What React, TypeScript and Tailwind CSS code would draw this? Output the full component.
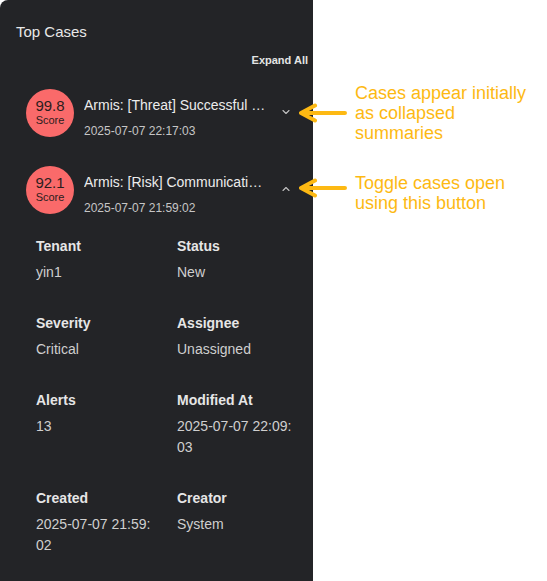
import { ChevronDown, ChevronUp } from 'lucide-react';

type Detail = { label: string; value: string };

const cases = [
  { id: 1, score: '99.8', title: 'Armis: [Threat] Successful Malicious Login Detected', time: '2025-07-07 22:17:03', open: false },
  { id: 2, score: '92.1', title: 'Armis: [Risk] Communication with Unsanctioned Service', time: '2025-07-07 21:59:02', open: true },
];

const details: Detail[] = [
  { label: 'Tenant', value: 'yin1' },
  { label: 'Status', value: 'New' },
  { label: 'Severity', value: 'Critical' },
  { label: 'Assignee', value: 'Unassigned' },
  { label: 'Alerts', value: '13' },
  { label: 'Modified At', value: '2025-07-07 22:09:03' },
  { label: 'Created', value: '2025-07-07 21:59:02' },
  { label: 'Creator', value: 'System' },
];

function Arrow({ className }: { className: string }) {
  return (
    <svg className={className} width="50" height="20" viewBox="0 0 50 20" fill="none">
      <path d="M3 10H47M17 2.5L3 10L17 17.5" stroke="#fdb913" strokeWidth="4" strokeLinecap="round" strokeLinejoin="round" />
    </svg>
  );
}

function CaseRow({ score, title, time, open }: { score: string; title: string; time: string; open: boolean }) {
  return (
    <div className="flex items-start py-[13px] pl-[10px] pr-4">
      <div className="flex h-12 w-12 shrink-0 flex-col items-center justify-center rounded-full bg-[#fa6a6a] pb-[3px] text-[#2b1d1d]">
        <span className="text-[15px] leading-[17px]">{score}</span>
        <span className="text-[11px] leading-[13px]">Score</span>
      </div>
      <div className="ml-[10px] min-w-0 flex-1 pt-[7px]">
        <div className="truncate text-[14px] leading-[18px] text-[#ececec]">{title}</div>
        <div className="mt-2 text-[12px] leading-[18px] text-[#c6c6c6]">{time}</div>
      </div>
      <div className="ml-3 mt-[17px] flex h-3 w-3 shrink-0 items-center justify-center text-[#c2c2c2]">
        {open ? <ChevronUp size={12} strokeWidth={2.2} /> : <ChevronDown size={12} strokeWidth={2.2} />}
      </div>
    </div>
  );
}

export default function App() {
  return (
    <div className="relative flex h-[581px] w-[547px] bg-white font-['Liberation_Sans',Arial,sans-serif]">
      <div className="w-[313px] shrink-0 rounded-tl-lg bg-[#232427] pl-4 pr-[5px] pt-[22px]">
        <h2 className="text-[15px] leading-5 text-[#e8e8e8]">Top Cases</h2>
        <div className="mt-[10px] mb-2 text-right text-[11px] font-bold leading-4 text-[#e4e4e4]">Expand All</div>
        {cases.map((c) => (
          <CaseRow key={c.id} score={c.score} title={c.title} time={c.time} open={c.open} />
        ))}
        <div className="mt-[6px] grid grid-cols-[118px_118px] gap-x-[23px] gap-y-[30px] pl-5">
          {details.map((d) => (
            <div key={d.label}>
              <div className="mb-[5px] text-[14px] font-bold leading-[21px] text-[#e6e6e6]">{d.label}</div>
              <div className="break-all text-[14px] leading-[21px] text-[#cfcfcf]">{d.value}</div>
            </div>
          ))}
        </div>
      </div>

      <Arrow className="absolute left-[298px] top-[103px]" />
      <p className="absolute left-[355px] top-[83px] text-[18px] leading-5 text-[#fdb913]">
        Cases appear initially
        <br />
        as collapsed
        <br />
        summaries
      </p>
      <Arrow className="absolute left-[298px] top-[178px]" />
      <p className="absolute left-[355px] top-[173px] text-[18px] leading-5 text-[#fdb913]">
        Toggle cases open
        <br />
        using this button
      </p>
    </div>
  );
}
